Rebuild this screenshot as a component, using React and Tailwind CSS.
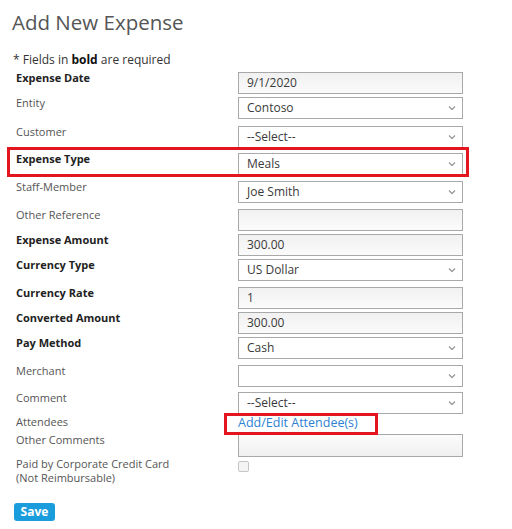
import React from "react";

const FONT = { fontFamily: '"Open Sans", "Noto Sans", Arial, sans-serif' };

function Chevron() {
  return (
    <svg width="8" height="5" viewBox="0 0 8 5" className="absolute right-[6px] top-1/2 -translate-y-1/2">
      <path d="M1 1 L4 4 L7 1" fill="none" stroke="#9a9a9a" strokeWidth="1.3" />
    </svg>
  );
}

function Field({ type, value }) {
  if (type === "select") {
    return (
      <div className="relative w-[225px] h-[22px] border border-[#a9a9a9] bg-white flex items-center pl-[8px] text-[12px] text-[#3a3a3a]">
        {value}
        <Chevron />
      </div>
    );
  }
  return (
    <div className="w-[225px] h-[22px] border border-[#a9a9a9] bg-gradient-to-b from-[#f1f1f1] to-[#fbfbfb] flex items-center pl-[8px] text-[12px] text-[#3a3a3a]">
      {value}
    </div>
  );
}

const rows = [
  { label: "Expense Date", bold: true, type: "input", value: "9/1/2020", h: "h-[25px]" },
  { label: "Entity", type: "select", value: "Contoso", h: "h-[29px]" },
  { label: "Customer", type: "select", value: "--Select--", h: "h-[27px]" },
  { label: "Expense Type", bold: true, type: "select", value: "Meals", h: "h-[28px]", box: true },
  { label: "Staff-Member", type: "select", value: "Joe Smith", h: "h-[28px]" },
  { label: "Other Reference", type: "input", value: "", h: "h-[25px]" },
  { label: "Expense Amount", bold: true, type: "input", value: "300.00", h: "h-[25px]" },
  { label: "Currency Type", bold: true, type: "select", value: "US Dollar", h: "h-[28px]" },
  { label: "Currency Rate", bold: true, type: "input", value: "1", h: "h-[25px]" },
  { label: "Converted Amount", bold: true, type: "input", value: "300.00", h: "h-[25px]" },
  { label: "Pay Method", bold: true, type: "select", value: "Cash", h: "h-[28px]" },
  { label: "Merchant", type: "select", value: "", h: "h-[27px]" },
  { label: "Comment", type: "select", value: "--Select--", h: "h-[24px]" },
];

function Label({ bold, children }) {
  return (
    <div
      className={
        "w-[238px] shrink-0 pl-[16px] text-[11px] leading-[14px] -mt-[1px] " +
        (bold ? "font-bold text-[#222]" : "text-[#555]")
      }
    >
      {children}
    </div>
  );
}

export default function App() {
  return (
    <div style={FONT} className="w-[512px] h-[529px] bg-white overflow-hidden">
      <h1 className="pl-[12px] pt-[8px] text-[20.5px] leading-[28px] text-[#555] font-normal">Add New Expense</h1>
      <p className="pl-[13px] mt-[16px] text-[12px] leading-[16px] text-[#333]">
        * Fields in <b className="text-[#111]">bold</b> are required
      </p>
      <div className="mt-[4px] flex flex-col">
        {rows.map((r) => (
          <div key={r.label} className={"relative flex items-start " + r.h}>
            <Label bold={r.bold}>{r.label}</Label>
            <Field type={r.type} value={r.value} />
            {r.box && (
              <div className="absolute left-[7px] top-[-6px] w-[462px] h-[30px] border-[3px] border-[#e3151f]" />
            )}
          </div>
        ))}
        <div className="relative flex items-start h-[18px]">
          <Label>Attendees</Label>
          <a className="text-[12.5px] leading-[16px] text-[#2d7fd3] -mt-[1px]">Add/Edit Attendee(s)</a>
          <div className="absolute left-[224px] top-[-3px] w-[154px] h-[22px] border-[3px] border-[#e3151f]" />
        </div>
        <div className="flex items-start h-[24px]">
          <Label>Other Comments</Label>
          <div className="w-[225px] h-[23px] border border-[#a9a9a9] bg-gradient-to-b from-[#fbfbfb] to-[#f0f0f0]" />
        </div>
        <div className="flex items-start h-[45px]">
          <Label>
            Paid by Corporate Credit Card
            <br />
            (Not Reimbursable)
          </Label>
          <div className="mt-[3px] w-[11px] h-[11px] border border-[#c4c4c4] rounded-[2px] bg-[#f4f4f4]" />
        </div>
        <div className="flex pl-[14px]">
          <button className="w-[41px] h-[18px] rounded-[3px] bg-[#1a9ddc] text-white text-[12px] font-bold leading-[18px]">
            Save
          </button>
        </div>
      </div>
    </div>
  );
}
